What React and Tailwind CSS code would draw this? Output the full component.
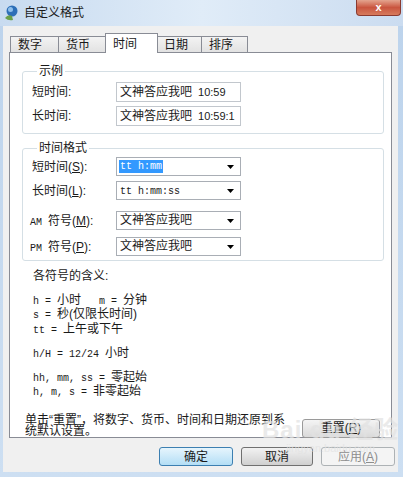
import React from "react";

const Arrow = () => (
  <svg width="7" height="4" viewBox="0 0 7 4" className="ml-auto">
    <polygon points="0,0 7,0 3.5,4" fill="#000" />
  </svg>
);

const Combo = ({ children, selected }) => (
  <div className="w-[125px] h-[19px] border border-[#a9aeb5] bg-white flex items-center pl-[2px] pr-[6px]">
    <span
      className={
        selected
          ? "bg-[#3399ff] text-white px-[1px] leading-[13px] font-['Liberation_Mono',monospace] text-[10px]"
          : "px-[1px] leading-[13px]"
      }
    >
      {children}
    </span>
    <Arrow />
  </div>
);

const Sample = ({ time }) => (
  <div className="w-[125px] h-[20px] border border-[#c2c7cd] bg-white flex items-center pl-[3px]">
    <span className="text-[12px]">文神答应我吧</span>
    <span className="ml-[6px] text-[11px] font-['Liberation_Sans',sans-serif] whitespace-nowrap overflow-hidden">{time}</span>
  </div>
);

const M = ({ children }) => (
  <span className="font-['Liberation_Mono',monospace] text-[10px] whitespace-pre">{children}</span>
);

const Tab = ({ label, w, active }) =>
  active ? (
    <div className={`${w} h-[20px] -mb-[1px] -mx-[1px] relative z-10 bg-white border border-b-0 border-[#898c95] pl-[7px] pt-[1px] text-[12px]`}>
      {label}
    </div>
  ) : (
    <div className={`${w} h-[16px] bg-gradient-to-b from-[#f3f3f3] to-[#e2e2e2] border border-b-0 border-[#898c95] pl-[7px] text-[12px] leading-[16px] -ml-[1px]`}>
      {label}
    </div>
  );

const Btn = ({ children, kind }) => {
  if (kind === "default")
    return (
      <div className="w-[74px] h-[19px] rounded-[3px] border border-[#3c7fb1] bg-gradient-to-b from-[#e6f5fd] to-[#b3def5] flex items-center justify-center text-[12px]">
        {children}
      </div>
    );
  if (kind === "disabled")
    return (
      <div className="w-[74px] h-[19px] rounded-[3px] border border-[#adb2b5] bg-[#f4f4f4] flex items-center justify-center text-[12px] text-[#8d8d8d]">
        {children}
      </div>
    );
  return (
    <div className="w-[72px] h-[19px] rounded-[3px] border border-[#707070] bg-gradient-to-b from-[#f2f2f2] to-[#d0d0d0] flex items-center justify-center text-[12px]">
      {children}
    </div>
  );
};

export default function App() {
  return (
    <div className="w-[403px] h-[477px] relative overflow-hidden bg-gradient-to-b from-[#bcd3ec] to-[#cddff2] font-['Liberation_Sans','Noto_Sans_CJK_SC',sans-serif] text-[#1a1a1a] flex flex-col">
      {/* title bar */}
      <div className="h-[26px] shrink-0 flex items-start relative bg-gradient-to-r from-[#c8dbf0] via-[#e0ecf8] to-[#cbdcf0]">
        <svg width="14" height="16" viewBox="0 0 14 16" className="ml-[4px] mt-[5px]">
          <circle cx="8" cy="6" r="5.5" fill="#2d6fb8" />
          <circle cx="6.5" cy="4.5" r="2.5" fill="#8fc0ec" />
          <path d="M1 13 Q4 9 8 11 L9 15 Q4 16 1 13Z" fill="#6aa04a" />
        </svg>
        <span className="ml-[6px] mt-[6px] text-[12px] leading-[14px]">自定义格式</span>
        <div className="ml-auto mr-[2px] w-[45px] h-[16px] rounded-b-[4px] border border-t-0 border-[#8a3a30] bg-gradient-to-b from-[#e3a48f] via-[#c9553f] to-[#d67a5c] flex items-center justify-center">
          <span className="text-white text-[11px] font-bold leading-none font-['Liberation_Sans',sans-serif]">x</span>
        </div>
      </div>

      {/* body */}
      <div className="mx-[3px] mr-[5px] h-[446px] bg-[#f0f0f0] flex flex-col">
        <div className="flex items-end ml-[8px] mt-[6px] h-[20px]">
          <Tab label="数字" w="w-[49px]" />
          <Tab label="货币" w="w-[48px]" />
          <Tab label="时间" w="w-[53px]" active />
          <Tab label="日期" w="w-[46px]" />
          <Tab label="排序" w="w-[47px]" />
        </div>

        <div className="ml-[6px] w-[383px] h-[386px] bg-white border border-[#898c95] pl-[12px] flex flex-col text-[12px]">
          <fieldset className="mt-[11px] w-[362px] border border-[#d5dfe5] rounded-[3px] pl-[9px] pb-[7px]">
            <legend className="ml-[5px] px-[2px] leading-[14px]">示例</legend>
            <div className="flex items-center mt-[4px]">
              <span className="w-[84px]">短时间:</span>
              <Sample time="10:59" />
            </div>
            <div className="flex items-center mt-[4px]">
              <span className="w-[84px]">长时间:</span>
              <Sample time="10:59:1" />
            </div>
          </fieldset>

          <fieldset className="mt-[7px] w-[362px] border border-[#d5dfe5] rounded-[3px] pl-[9px] pb-[4px]">
            <legend className="ml-[5px] px-[2px] leading-[14px]">时间格式</legend>
            <div className="flex items-center mt-[2px]">
              <span className="w-[84px]">
                短时间(<u>S</u>):
              </span>
              <Combo selected>tt h:mm</Combo>
            </div>
            <div className="flex items-center mt-[5px]">
              <span className="w-[84px]">
                长时间(<u>L</u>):
              </span>
              <Combo>
                <M>tt h:mm:ss</M>
              </Combo>
            </div>
            <div className="flex items-center mt-[11px]">
              <span className="w-[84px] -ml-[2px] mr-[2px]">
                <M>AM </M>符号(<u>M</u>):
              </span>
              <Combo>文神答应我吧</Combo>
            </div>
            <div className="flex items-center mt-[7px]">
              <span className="w-[84px] -ml-[2px] mr-[2px]">
                <M>PM </M>符号(<u>P</u>):
              </span>
              <Combo>文神答应我吧</Combo>
            </div>
          </fieldset>

          <div className="ml-[11px] mt-[9px] leading-[12.5px]">
            <div>各符号的含义:</div>
            <div className="mt-[11px]">
              <M>h = </M>小时<M>   m = </M>分钟
            </div>
            <div>
              <M>s = </M>秒(仅限长时间)
            </div>
            <div>
              <M>tt = </M>上午或下午
            </div>
            <div className="mt-[10px]">
              <M>h/H = 12/24 </M>小时
            </div>
            <div className="mt-[9px]">
              <M>hh, mm, ss = </M>零起始
            </div>
            <div>
              <M>h, m, s = </M>非零起始
            </div>
          </div>

          <div className="flex items-start mt-[15px] ml-[3px]">
            <div className="w-[278px] leading-[11px] whitespace-nowrap">
              单击“重置”，将数字、货币、时间和日期还原到系
              <br />
              统默认设置。
            </div>
            <div className="ml-[-1px] mt-[4px] w-[78px] h-[19px] rounded-[3px] border border-[#9a9a9a] bg-gradient-to-b from-[#f4f4f4] to-[#dadada] flex items-center justify-center">
              重置(<u>R</u>)
            </div>
          </div>
        </div>

        <div className="flex justify-end gap-[8px] pr-[3px] mt-[9px]">
          <Btn kind="default">确定</Btn>
          <Btn>取消</Btn>
          <Btn kind="disabled">
            应用(<u>A</u>)
          </Btn>
        </div>
      </div>

      {/* watermark */}
      <div className="absolute left-[262px] top-[418px] text-[#e2e2e2] opacity-70 pointer-events-none flex flex-col items-center">
        <span className="text-[24px] font-bold leading-[24px] tracking-[1px]">Bai du 经验</span>
        <span className="text-[11px] leading-[12px] font-['Liberation_Sans',sans-serif]">jingyan.baidu.com</span>
      </div>
    </div>
  );
}
